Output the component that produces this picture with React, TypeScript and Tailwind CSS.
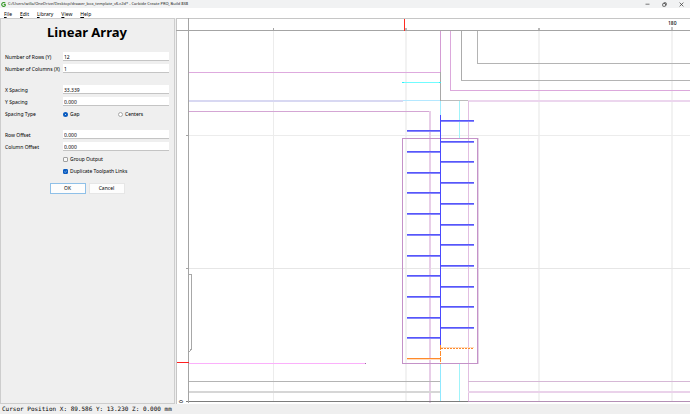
import { useState } from "react";

const MENUS = ["File", "Edit", "Library", "View", "Help"];

const FAR = 4000;

// [x, y, width, height, colour]
type Bar = [number, number, number, number, string];

const GRID: Bar[] = [
  [97, 13, 1, 370, "#ececec"],
  [229, 13, 2, 370, "#f2f2f2"],
  [362, 13, 2, 370, "#f2f2f2"],
  [495, 13, 2, 370, "#f2f2f2"],
  [13, 117, FAR, 1, "#ececec"],
  [13, 250, FAR, 1, "#e6e6e6"],
];

const PATHS: Bar[] = [
  [13, 54, 251, 1, "#deaade"],
  [13, 82, 214, 2, "#d8d8f2"],
  [227, 82, 37, 1, "#b4e8ff"],
  [264, 82, 28, 1, "#bcbcbc"],
  [292, 82, FAR, 2, "#ecd6ee"],
  [13, 93, 241, 1, "#d4a6d4"],
  [253, 93, 2, 292, "#e8cee8"],
  [264, 13, 1, 41, "#d49cd4"],
  [264, 54, 1, 29, "#a8a8a8"],
  [264, 83, 1, 14, "#a0ecff"],
  [274, 13, 1, 60, "#dca8dc"],
  [274, 72, FAR, 1, "#dca8dc"],
  [285, 13, 1, 50, "#acacac"],
  [285, 62, FAR, 1, "#b4b4b4"],
  [301, 13, 1, 33, "#b4b4b4"],
  [301, 45, FAR, 1, "#b4b4b4"],
  [227, 64, 37, 1, "#70fcff"],
  [226, 64, 2, 1, "#30f0f8"],
  [263, 64, 2, 1, "#30f0f8"],
  [283, 83, 1, 38, "#a0f4fa"],
  [283, 346, 1, 38, "#a0f4fa"],
  [292, 83, 1, 301, "#e2bee2"],
  [264, 346, 1, 38, "#90e8ff"],
  [13, 345, 177, 1, "#fbb0fb"],
  [189, 345, 1, 1, "#a070a0"],
  [13, 363, 251, 1, "#b4b4b4"],
  [13, 373, 251, 2, "#d6d6d6"],
  [10, 383, 282, 1, "#7c7c7c"],
  [292, 363, FAR, 1, "#d6b8d6"],
  [292, 373, FAR, 2, "#ead2ea"],
  [292, 383, FAR, 1, "#b490b6"],
];

const RULERS: Bar[] = [
  [0, 0, FAR, 1, "#c6c6c6"],
  [0, 0, 1, 386, "#c6c6c6"],
  [0, 12, FAR, 1, "#a4a4a4"],
  [12, 0, 1, 385, "#a4a4a4"],
  [97, 10, 1, 2, "#a4a4a4"],
  [229, 10, 2, 2, "#b8b8b8"],
  [362, 10, 2, 2, "#b8b8b8"],
  [495, 9, 2, 3, "#c4c4c4"],
  [10, 117, 2, 1, "#a4a4a4"],
  [10, 250, 2, 1, "#a4a4a4"],
  [228, 1, 1, 12, "#ff2a20"],
  [1, 344, 12, 1, "#ff2020"],
];

const RIGHT_TEETH = [102, 123, 143, 164, 185, 206, 226, 247, 268, 288, 309];
const LEFT_TEETH = [112, 133, 154, 174, 195, 216, 237, 257, 278, 299, 319];

function Bars({ items }: { items: Bar[] }) {
  return (
    <g>
      {items.map(([x, y, width, height, fill]) => (
        <rect key={`${x}-${y}-${width}`} x={x} y={y} width={width} height={height} fill={fill} />
      ))}
    </g>
  );
}

function Tooth({ x, y }: { x: number; y: number }) {
  return (
    <g>
      <rect x={x} y={y} width={33} height={1} fill="#5656fa" />
      <rect x={x} y={y + 1} width={33} height={1} fill="#8686fc" />
    </g>
  );
}

function Workspace() {
  return (
    <svg className="block h-full w-full bg-white" shapeRendering="crispEdges" role="img" aria-label="Design canvas">
      <Bars items={GRID} />
      <Bars items={PATHS} />
      <path d="M13 256.5H15.5V331L13 334" fill="none" stroke="#a8a8a8" />

      {/* selection bounds */}
      <rect x={226.5} y={120.5} width={75} height={225} fill="none" stroke="#c492c8" />
      <rect x={302} y={120} width={1} height={226} fill="#e6d4e8" />

      <rect x={264} y={97} width={1} height={230} fill="#4a4aff" />
      {RIGHT_TEETH.map((y) => (
        <Tooth key={y} x={265} y={y} />
      ))}
      {LEFT_TEETH.map((y) => (
        <Tooth key={y} x={231} y={y} />
      ))}

      {/* source toolpath */}
      <path d="M264.5 327V346" stroke="#ff8a2a" strokeDasharray="5 1" />
      <path d="M265 329.5H298M231 341.5H264" stroke="#ffdcc0" />
      <path d="M265 330.5H298" stroke="#ff8a2a" strokeDasharray="2 1" />
      <path d="M231 340.5H264" stroke="#ff8a2a" />

      <Bars items={RULERS} />
      <text x={492} y={7} className="font-['Open_Sans',sans-serif] text-[5px] font-semibold" fill="#222">
        180
      </text>
      <text
        transform="translate(7 385) rotate(-90)"
        className="font-['Open_Sans',sans-serif] text-[5px] font-semibold"
        fill="#222"
      >
        0
      </text>
    </svg>
  );
}

function Field({ id, label, initial }: { id: string; label: string; initial: string }) {
  const [value, setValue] = useState(initial);
  return (
    <div className="flex h-3 items-start pt-px">
      <label htmlFor={id} className="w-[58px] shrink-0 whitespace-nowrap leading-[10px]">
        {label}
      </label>
      <input
        id={id}
        value={value}
        onChange={(e) => setValue(e.target.value)}
        className="h-[9px] min-w-0 flex-1 border-b border-[#c4c4c4] bg-white px-px pt-px leading-[7px] outline-none"
      />
    </div>
  );
}

function Radio({ id, label, checked, onChange }: { id: string; label: string; checked: boolean; onChange: () => void }) {
  return (
    <span className="flex flex-1 items-center gap-[2px]">
      <input
        id={id}
        type="radio"
        name="spacing"
        checked={checked}
        onChange={onChange}
        className="size-[5px] appearance-none rounded-full border border-[#a8a8a8] bg-white checked:border-2 checked:border-[#0a5cc0]"
      />
      <label htmlFor={id}>{label}</label>
    </span>
  );
}

function Check({ id, label, initial }: { id: string; label: string; initial: boolean }) {
  const [checked, setChecked] = useState(initial);
  return (
    <div className="flex h-3 items-center gap-[2px] pl-[58px]">
      <span className="relative flex">
        <input
          id={id}
          type="checkbox"
          checked={checked}
          onChange={() => setChecked(!checked)}
          className="size-[5px] appearance-none rounded-[1px] border border-[#a0a0a0] bg-[#f8f8f8] checked:border-[#0a5cc0] checked:bg-[#0a5cc0]"
        />
        {checked && (
          <svg viewBox="0 0 5 5" className="pointer-events-none absolute inset-0 size-[5px]">
            <path d="M1.2 2.6L2.2 3.4L3.9 1.8" fill="none" stroke="#b8d4f4" strokeWidth=".6" />
          </svg>
        )}
      </span>
      <label htmlFor={id}>{label}</label>
    </div>
  );
}

function LinearArrayPanel() {
  const [spacing, setSpacing] = useState("gap");
  return (
    <form
      onSubmit={(e) => e.preventDefault()}
      className="mr-px w-[175px] shrink-0 border border-[#cdcdcd] bg-[#efefef] pr-[5px] pl-1 text-[5px] leading-[9px] text-black"
    >
      <h1 className="pt-[3px] pb-[9px] text-center text-[13px] leading-5 font-bold">Linear Array</h1>
      <Field id="rows" label="Number of Rows (Y)" initial="12" />
      <Field id="columns" label="Number of Columns (X)" initial="1" />
      <div className="mt-[9px]">
        <Field id="x-spacing" label="X Spacing" initial="33.339" />
        <Field id="y-spacing" label="Y Spacing" initial="0.000" />
        <div role="radiogroup" aria-labelledby="spacing-type" className="flex h-3 items-center">
          <span id="spacing-type" className="w-[58px] shrink-0">
            Spacing Type
          </span>
          <div className="-mr-1 flex flex-1">
            <Radio id="gap" label="Gap" checked={spacing === "gap"} onChange={() => setSpacing("gap")} />
            <Radio
              id="centers"
              label="Centers"
              checked={spacing === "centers"}
              onChange={() => setSpacing("centers")}
            />
          </div>
        </div>
      </div>
      <div className="mt-[9px]">
        <Field id="row-offset" label="Row Offset" initial="0.000" />
        <Field id="column-offset" label="Column Offset" initial="0.000" />
        <Check id="group" label="Group Output" initial={false} />
        <Check id="links" label="Duplicate Toolpath Links" initial={true} />
      </div>
      <div className="mt-[6px] flex justify-center gap-[3px]">
        <button type="submit" className="h-[11px] w-9 border border-[#8fc0e8] bg-[#fdfdfd]">
          OK
        </button>
        <button type="button" className="h-[11px] w-9 border border-[#e6e6e6] bg-[#fdfdfd]">
          Cancel
        </button>
      </div>
    </form>
  );
}

function TitleBar() {
  return (
    <header className="flex h-2 shrink-0 items-center bg-[#f1f2f3] pr-[6px] pl-px text-[4px] leading-[8px] text-[#222]">
      <svg viewBox="0 0 10 10" className="size-[5px]">
        <path d="M8.5 2.5A4 4 0 1 0 8.5 7.5V5.2H5.5" fill="none" stroke="#3a9a2c" strokeWidth="2.2" />
      </svg>
      <span className="ml-[2px] flex-1 whitespace-nowrap">
        C:/Users/willa/OneDrive/Desktop/drawer_box_template_v6.c2d* - Carbide Create PRO, Build 838
      </span>
      <div className="flex gap-3">
        <button aria-label="Minimize">
          <svg width="5" height="5" viewBox="0 0 5 5" fill="none" stroke="#444" strokeWidth=".7">
            <path d="M.5 2.2H4.5" />
          </svg>
        </button>
        <button aria-label="Restore">
          <svg width="5" height="5" viewBox="0 0 5 5" fill="none" stroke="#333" strokeWidth=".7">
            <rect x=".7" y="1.5" width="2.8" height="2.8" rx=".5" />
            <path d="M1.7.7H3.6Q4.3.7 4.3 1.4V3.4" />
          </svg>
        </button>
        <button aria-label="Close">
          <svg width="5" height="5" viewBox="0 0 5 5" fill="none" stroke="#333" strokeWidth=".7">
            <path d="M.6.6L4.4 4.4M4.4.6L.6 4.4" />
          </svg>
        </button>
      </div>
    </header>
  );
}

export default function App() {
  return (
    <div className="flex h-screen flex-col overflow-hidden bg-[#efefef] font-['Noto_Sans',sans-serif]">
      <TitleBar />
      <nav className="flex h-[10px] shrink-0 items-center gap-2 bg-white pt-[2px] pl-1 text-[5px] leading-[8px] text-black">
        {MENUS.map((menu) => (
          <button key={menu}>
            <span className="underline">{menu[0]}</span>
            {menu.slice(1)}
          </button>
        ))}
      </nav>
      <main className="flex min-h-0 flex-1">
        <LinearArrayPanel />
        <section className="min-w-0 flex-1">
          <Workspace />
        </section>
      </main>
      <footer className="flex h-[10px] shrink-0 items-center pl-[2px] font-['DejaVu_Sans_Mono',monospace] text-[6px] leading-[10px] text-black">
        Cursor Position X: 89.586 Y: 13.230 Z: 0.000 mm
      </footer>
    </div>
  );
}
